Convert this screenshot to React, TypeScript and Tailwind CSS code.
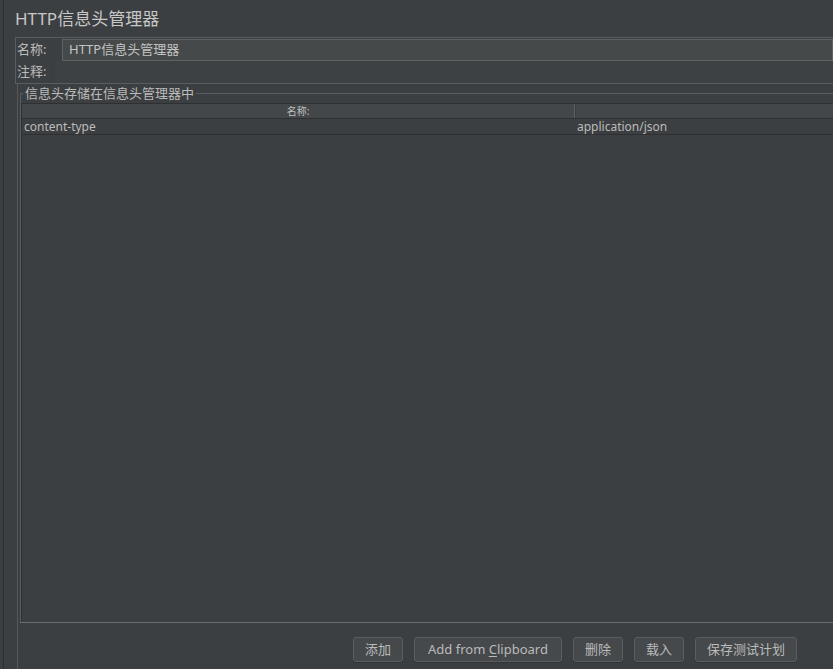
import React from "react";

const font = { fontFamily: '"Noto Sans", "Noto Sans CJK SC", sans-serif' };

function Btn({ children, w }: { children: React.ReactNode; w: string }) {
  return (
    <div
      className={`${w} h-[25px] flex items-center justify-center rounded-[3px] border border-[#5b5e60] bg-[#45494b] text-[13px] text-[#bbbbbb] shadow-[0_1px_0_#333]`}
    >
      {children}
    </div>
  );
}

export default function App() {
  return (
    <div
      className="w-[833px] h-[669px] overflow-hidden bg-[#3c3f41] flex text-[#bbbbbb]"
      style={font}
    >
      {/* left edge */}
      <div className="w-[4px] h-full border-r border-[#2c2e30]" />
      <div className="flex-1 flex flex-col min-w-0">
        {/* title */}
        <div className="h-[37px] pl-[11px] flex items-center text-[17px] leading-none text-[#c8c8c8]">
          HTTP信息头管理器
        </div>
        {/* name/comment box */}
        <div className="ml-[11px] border-t border-l border-b border-[#5a5d5f] h-[47px] flex flex-col">
          <div className="h-[23px] flex items-center">
            <span className="w-[46px] pl-[1px] text-[13px]">名称:</span>
            <div className="flex-1 h-[22px] border border-[#5f6264] bg-[#45494a] flex items-center pl-[6px] text-[13px] text-[#c4c4c4]">
              HTTP信息头管理器
            </div>
          </div>
          <div className="flex-1 flex items-center">
            <span className="w-[39px] pl-[1px] text-[13px]">注释:</span>
            <div className="flex-1 h-full bg-[#3e4143]" />
          </div>
        </div>
        {/* lower section */}
        <div className="flex-1 ml-[13px] border-l border-[#56595b] flex flex-col">
          {/* group box */}
          <div className="relative mt-[9px] ml-[2px] h-[529px] border-t border-l border-[#5a5d5f] flex flex-col">
            <span className="absolute -top-[9px] left-[2px] px-[2px] bg-[#3c3f41] text-[13px] leading-[17px]">
              信息头存储在信息头管理器中
            </span>
            <div className="mt-[9px] flex-1 border-t border-l border-[#2e3032] flex flex-col">
              {/* header */}
              <div className="h-[15px] flex bg-[#44474a] border-b border-[#2e3032] text-[10px] leading-none">
                <div className="w-[553px] border-r border-[#5d6062] flex items-center justify-center text-[#c0c0c0]">
                  名称:
                </div>
                <div className="flex-1 border-l border-[#3a3c3e]" />
              </div>
              {/* row */}
              <div className="h-[16px] flex border-b border-[#2e3032] text-[12px] leading-none">
                <div className="w-[554px] pl-[2px] flex items-center">content-type</div>
                <div className="flex-1 flex items-center pl-[1px]">application/json</div>
              </div>
              <div className="flex-1" />
            </div>
          </div>
          <div className="h-px bg-[#6a6d6f] ml-[2px]" />
          {/* buttons */}
          <div className="flex-1 flex items-start pt-[14px] pl-[335px] gap-[11px]">
            <Btn w="w-[50px]">添加</Btn>
            <Btn w="w-[148px]">
              <span>
                Add from <span className="underline underline-offset-2">C</span>lipboard
              </span>
            </Btn>
            <Btn w="w-[50px]">删除</Btn>
            <Btn w="w-[50px]">载入</Btn>
            <Btn w="w-[102px]">保存测试计划</Btn>
          </div>
        </div>
      </div>
    </div>
  );
}
